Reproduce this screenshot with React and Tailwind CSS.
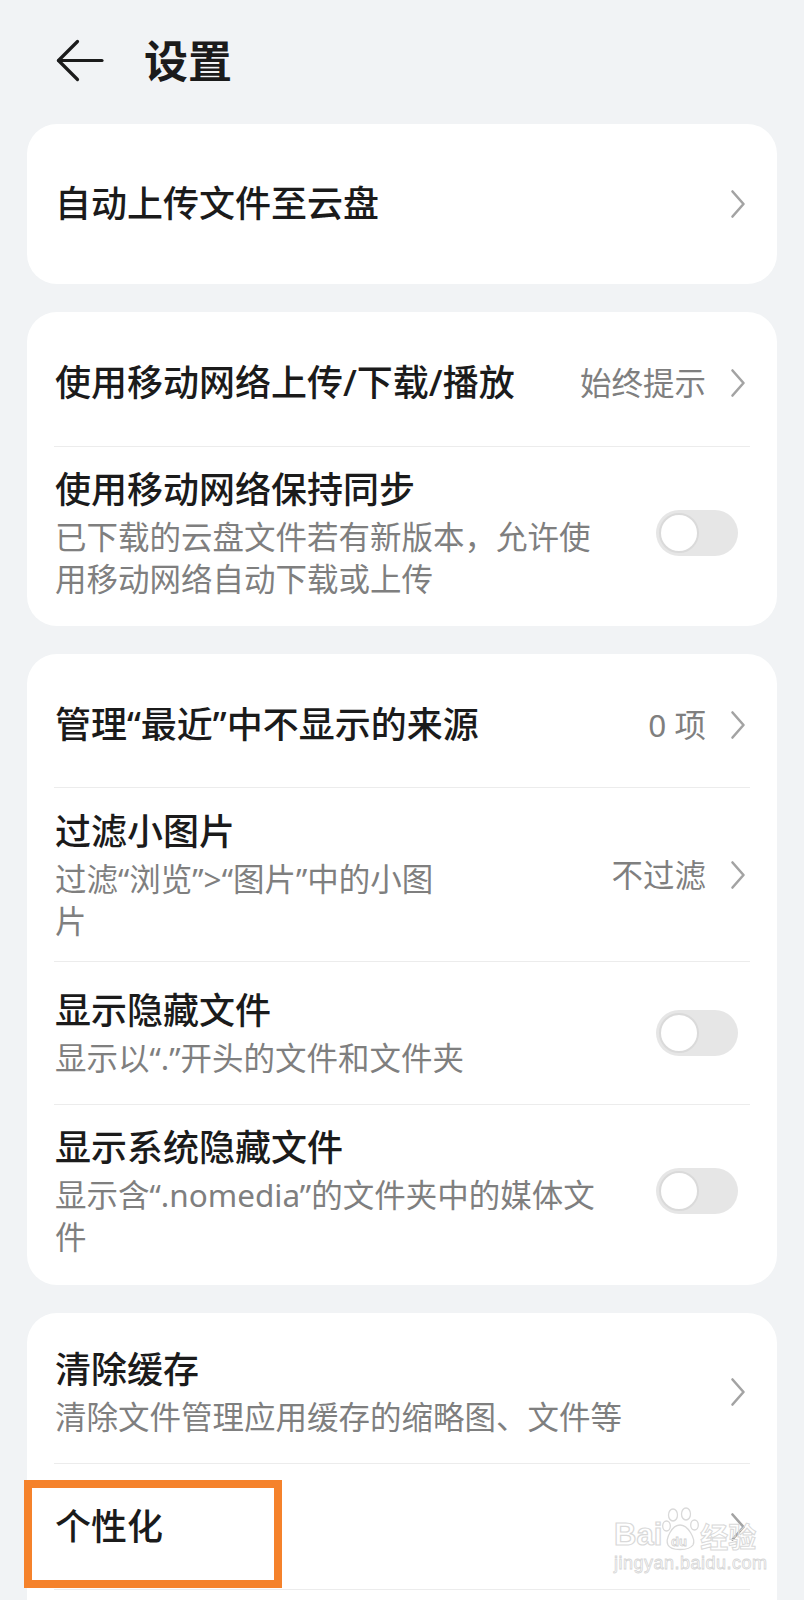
import React from "react";

const FONT = { fontFamily: '"Noto Sans", "Noto Sans CJK SC", sans-serif' };

function Chevron() {
  return (
    <svg width="16" height="30" viewBox="0 0 16 30" fill="none" className="shrink-0">
      <path d="M2.5 2.5 L13.5 15 L2.5 27.5" stroke="#a3a3a3" strokeWidth="2.6" strokeLinecap="round" strokeLinejoin="round" />
    </svg>
  );
}

function Toggle() {
  return (
    <div className="flex h-[46px] w-[82px] shrink-0 items-center rounded-full bg-[#e6e6e6] p-[3px]">
      <div className="h-[40px] w-[40px] rounded-full border-[2.5px] border-[#dadada] bg-white" />
    </div>
  );
}

function Divider() {
  return <div className="mx-[27px] h-px bg-[#ececec]" />;
}

function Row({ title, sub, value, toggle, h, children }) {
  return (
    <div className={`relative flex items-center pl-[28px] ${toggle ? "pr-[39px]" : "pr-[31px]"} ${h}`}>
      <div className="flex-1">
        <div className="text-[36px] font-medium leading-[48px] text-[#1b1b1b] whitespace-nowrap">{title}</div>
        {sub && (
          <div className="mt-[2px] text-[31.5px] leading-[42px] text-[#7f7f7f]">
            {sub.map((l, i) => (
              <div key={i} className="whitespace-nowrap">{l}</div>
            ))}
          </div>
        )}
      </div>
      {toggle ? (
        <Toggle />
      ) : (
        <div className="flex items-center gap-[24px]">
          {value && <span className="text-[31.5px] leading-[42px] text-[#7f7f7f] whitespace-nowrap">{value}</span>}
          <Chevron />
        </div>
      )}
      {children}
    </div>
  );
}

function Card({ children, className = "" }) {
  return <div className={`mx-[27px] rounded-[30px] bg-white ${className}`}>{children}</div>;
}

export default function App() {
  return (
    <div className="relative h-[1600px] w-[804px] overflow-hidden bg-[#f1f3f5]" style={FONT}>
      {/* header */}
      <div className="flex h-[124px] items-center pb-[2px]">
        <svg width="50" height="44" viewBox="0 0 50 44" fill="none" className="ml-[56px]">
          <path d="M2.5 21.5 H46" stroke="#1b1b1b" strokeWidth="3.2" strokeLinecap="round" />
          <path d="M21.5 2.5 L2.5 21.5 L21.5 40.5" stroke="#1b1b1b" strokeWidth="3.2" strokeLinecap="round" strokeLinejoin="round" />
        </svg>
        <div className="ml-[38px] text-[44px] font-bold leading-none text-[#1b1b1b]">设置</div>
      </div>

      <div className="flex flex-col gap-[28px]">
        <Card className="flex h-[160px] items-center">
          <div className="w-full">
            <Row title="自动上传文件至云盘" h="h-[60px]" />
          </div>
        </Card>

        <Card className="py-[8px]">
          <Row title="使用移动网络上传/下载/播放" value="始终提示" h="h-[126px]" />
          <Divider />
          <Row
            title="使用移动网络保持同步"
            sub={["已下载的云盘文件若有新版本，允许使", "用移动网络自动下载或上传"]}
            toggle
            h="h-[171px]"
          />
        </Card>

        <Card className="py-[8px]">
          <Row title="管理“最近”中不显示的来源" value="0 项" h="h-[125px]" />
          <Divider />
          <Row title="过滤小图片" sub={["过滤“浏览”>“图片”中的小图", "片"]} value="不过滤" h="h-[173px]" />
          <Divider />
          <Row title="显示隐藏文件" sub={["显示以“.”开头的文件和文件夹"]} toggle h="h-[142px]" />
          <Divider />
          <Row
            title="显示系统隐藏文件"
            sub={["显示含“.nomedia”的文件夹中的媒体文", "件"]}
            toggle
            h="h-[172px]"
          />
        </Card>

        <Card className="pt-[8px] pb-[80px]">
          <Row title="清除缓存" sub={["清除文件管理应用缓存的缩略图、文件等"]} h="h-[142px]" />
          <Divider />
          <Row title="个性化" h="h-[125px]">
            <div className="pointer-events-none absolute left-[-3px] top-[16px] h-[108px] w-[258px] border-[8px] border-[#f5822b]" />
          </Row>
          <Divider />
          <div className="h-[60px]" />
        </Card>
      </div>

      {/* watermark */}
      <div className="pointer-events-none absolute left-[614px] top-[1506px] w-[156px]">
        <div className="flex items-end">
          <span className="text-[31px] font-bold leading-none text-transparent [-webkit-text-stroke:1.2px_#d9d9d9]" style={{ fontFamily: '"Liberation Sans", sans-serif' }}>Bai</span>
          <svg width="38" height="46" viewBox="0 0 38 46" fill="none" className="-mb-[2px]">
            <ellipse cx="11" cy="9" rx="4.5" ry="6" stroke="#d9d9d9" strokeWidth="1.3" />
            <ellipse cx="24" cy="8" rx="4.5" ry="6" stroke="#d9d9d9" strokeWidth="1.3" />
            <ellipse cx="4.5" cy="20" rx="3.8" ry="5" stroke="#d9d9d9" strokeWidth="1.3" />
            <ellipse cx="32.5" cy="19" rx="3.8" ry="5" stroke="#d9d9d9" strokeWidth="1.3" />
            <path d="M18 19 C10 19 3 33 6 39 C9 45 27 45 31 39 C34 33 26 19 18 19 Z" stroke="#d9d9d9" strokeWidth="1.3" />
            <text x="9" y="40" fontSize="13" fontWeight="700" fill="none" stroke="#d2d2d2" strokeWidth="0.8" fontFamily="Liberation Sans, sans-serif">du</text>
          </svg>
          <span className="text-[28px] font-bold leading-none text-transparent [-webkit-text-stroke:1px_#d9d9d9]" style={{ fontFamily: '"Noto Sans CJK SC", sans-serif' }}>经验</span>
        </div>
        <div className="mt-[4px] text-[18px] leading-none tracking-[0.5px] text-transparent [-webkit-text-stroke:0.8px_#d6d6d6]" style={{ fontFamily: '"Liberation Sans", sans-serif' }}>jingyan.baidu.com</div>
      </div>
    </div>
  );
}
